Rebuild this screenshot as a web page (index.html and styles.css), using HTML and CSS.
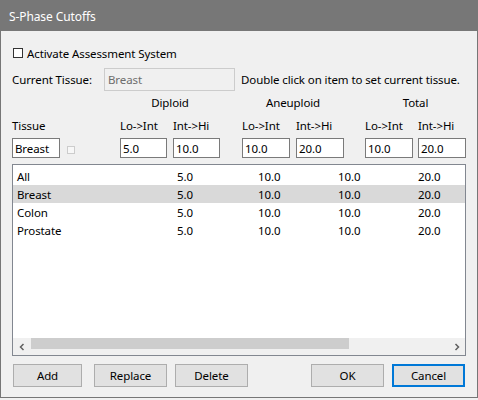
FILE: index.html
```html
<!DOCTYPE html>
<html>
<head>
<meta charset="utf-8">
<link rel="stylesheet" href="styles.css">
</head>
<body>
<div class="window">
  <div class="titlebar">S-Phase Cutoffs</div>
  <div class="content">
    <label class="activate"><span class="chk"></span>Activate Assessment System</label>
    <div class="current-row">
      <span class="lbl">Current Tissue:</span>
      <div class="edit disabled wide">Breast</div>
      <span class="hint">Double click on item to set current tissue.</span>
    </div>
    <div class="grid">
      <div class="gh g1">Diploid</div>
      <div class="gh g2">Aneuploid</div>
      <div class="gh g3">Total</div>

      <div class="cl c-tissue">Tissue</div>
      <div class="cl c3">Lo-&gt;Int</div>
      <div class="cl c5">Int-&gt;Hi</div>
      <div class="cl c7">Lo-&gt;Int</div>
      <div class="cl c9">Int-&gt;Hi</div>
      <div class="cl c11">Lo-&gt;Int</div>
      <div class="cl c13">Int-&gt;Hi</div>

      <div class="edit r3 c-tissue">Breast</div>
      <div class="r3 c2"><span class="minichk"></span></div>
      <div class="edit r3 c3">5.0</div>
      <div class="edit r3 c5">10.0</div>
      <div class="edit r3 c7">10.0</div>
      <div class="edit r3 c9">20.0</div>
      <div class="edit r3 c11">10.0</div>
      <div class="edit r3 c13">20.0</div>
    </div>
    <div class="list">
      <div class="rows">
        <div class="row"><span>All</span><span>5.0</span><span>10.0</span><span>10.0</span><span>20.0</span></div>
        <div class="row sel"><span>Breast</span><span>5.0</span><span>10.0</span><span>10.0</span><span>20.0</span></div>
        <div class="row"><span>Colon</span><span>5.0</span><span>10.0</span><span>10.0</span><span>20.0</span></div>
        <div class="row"><span>Prostate</span><span>5.0</span><span>10.0</span><span>10.0</span><span>20.0</span></div>
      </div>
      <div class="hscroll">
        <div class="arrow">
          <svg width="8" height="8" viewBox="0 0 8 8"><path d="M5.5 1 L2.5 4 L5.5 7" fill="none" stroke="#606060" stroke-width="1.5"/></svg>
        </div>
        <div class="track"><div class="thumb"></div></div>
        <div class="arrow">
          <svg width="8" height="8" viewBox="0 0 8 8"><path d="M2.5 1 L5.5 4 L2.5 7" fill="none" stroke="#606060" stroke-width="1.5"/></svg>
        </div>
      </div>
    </div>
    <div class="buttons">
      <div class="btn add">Add</div>
      <div class="btn replace">Replace</div>
      <div class="btn delete">Delete</div>
      <div class="spacer"></div>
      <div class="btn ok">OK</div>
      <div class="btn cancel">Cancel</div>
    </div>
  </div>
</div>
</body>
</html>
```
FILE: styles.css
```css
* { box-sizing: border-box; }
html, body { margin: 0; padding: 0; background: #f0f0f0; }
body {
  font-family: "Segoe UI", "Noto Sans", sans-serif;
  font-size: 11.5px;
  letter-spacing: -0.1px;
  color: #000;
  width: 478px;
  height: 400px;
  overflow: hidden;
}
.window {
  width: 478px;
  height: 398px;
  border: 1px solid #767676;
  border-top: none;
  background: #f0f0f0;
  display: flex;
  flex-direction: column;
}
.titlebar {
  height: 31px;
  background: #777777;
  color: #ffffff;
  display: flex;
  align-items: center;
  font-size: 12px;
  margin: 0 -1px;
  padding-left: 9px;
  padding-top: 1px;
}
.content {
  padding: 0 0 0 11px;
  display: flex;
  flex-direction: column;
}
.activate {
  display: flex;
  align-items: center;
  height: 16px;
  margin-top: 14px;
}
.chk {
  width: 10px;
  height: 10px;
  border: 1px solid #333;
  background: #fff;
  margin-right: 4px;
  margin-left: 1px;
}
.current-row {
  display: flex;
  align-items: center;
  margin-top: 7px;
  height: 23px;
}
.lbl { width: 92px; }
.edit {
  background: #fff;
  border: 1px solid #7a7a7a;
  height: 20px;
  line-height: 19px;
  padding-left: 3px;
  white-space: nowrap;
}
.edit.disabled {
  background: #f0f0f0;
  border-color: #cccccc;
  color: #6d6d6d;
}
.edit.wide {
  width: 131px;
  height: 23px;
  line-height: 22px;
}
.hint { margin-left: 6px; }
.grid {
  display: grid;
  grid-template-columns: 48px 60px 47px 6px 47px 22px 48px 6px 48px 21px 48px 5px 48px;
  grid-template-rows: 17px 18px 20px;
  row-gap: 6px;
  margin-top: 3px;
}
.grid .cl { margin-top: 0; }
.gh { grid-row: 1; text-align: center; line-height: 18px; }
.g1 { grid-column: 3 / 6; }
.g2 { grid-column: 7 / 10; }
.g3 { grid-column: 11 / 14; }
.cl { grid-row: 2; line-height: 18px; white-space: nowrap; }
.r3 { grid-row: 3; margin-top: -3px; }
.c-tissue { grid-column: 1; }
.c2 { grid-column: 2; display: flex; align-items: center; }
.c3 { grid-column: 3; }
.c5 { grid-column: 5; }
.c7 { grid-column: 7; }
.c9 { grid-column: 9; }
.c11 { grid-column: 11; }
.c13 { grid-column: 13; }
.edit.r3 { padding-left: 2px; }
.minichk {
  width: 8px;
  height: 8px;
  border: 1px solid #cccccc;
  background: #f7f7f7;
  margin-left: 7px;
}
.list {
  margin-top: 3px;
  width: 454px;
  height: 192px;
  border: 1px solid #828790;
  background: #fff;
  display: flex;
  flex-direction: column;
}
.rows { flex: 1; padding-top: 2px; }
.row {
  display: grid;
  grid-template-columns: 160px 81px 80px 80px 1fr;
  height: 18px;
  line-height: 19px;
}
.row span { padding-left: 4px; }
.row.sel { background: #d9d9d9; }
.hscroll {
  height: 17px;
  display: flex;
  background: #f0f0f0;
}
.arrow {
  width: 17px;
  display: flex;
  align-items: center;
  justify-content: center;
}
.track { flex: 1; display: flex; }
.thumb {
  width: 318px;
  background: #cdcdcd;
  margin: 0 0 6px 1px;
}
.buttons {
  display: flex;
  margin-top: 8px;
  height: 23px;
  padding-left: 1px;
}
.btn {
  width: 69px;
  height: 23px;
  background: #e1e1e1;
  border: 1px solid #adadad;
  display: flex;
  align-items: center;
  justify-content: center;
}
.replace { margin-left: 12px; width: 73px; }
.delete { margin-left: 8px; width: 73px; }
.spacer { width: 63px; }
.ok { width: 73px; }
.cancel { margin-left: 8px; width: 73px; border: 2px solid #0078d7; }
```
